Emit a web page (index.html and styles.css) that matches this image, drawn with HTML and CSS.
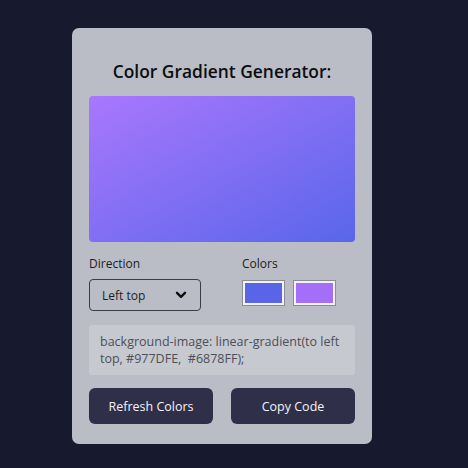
FILE: index.html
```html
<!DOCTYPE html>
<html lang="en">
<head>
<meta charset="utf-8">
<title>Color Gradient Generator</title>
<link rel="stylesheet" href="styles.css">
</head>
<body>
<main class="card">
  <h2 class="title">Color Gradient Generator:</h2>
  <div class="preview"></div>
  <div class="options">
    <div class="option">
      <p class="label">Direction</p>
      <div class="select">
        <span>Left top</span>
        <svg class="chev" width="12" height="8" viewBox="0 0 12 8"><path d="M2 1.8 L6 5.8 L10 1.8" fill="none" stroke="#111" stroke-width="2.4" stroke-linecap="round" stroke-linejoin="round"/></svg>
      </div>
    </div>
    <div class="option">
      <p class="label">Colors</p>
      <div class="swatches">
        <span class="swatch"><span class="fill fill-blue"></span></span>
        <span class="swatch"><span class="fill fill-purple"></span></span>
      </div>
    </div>
  </div>
  <div class="code">background-image: linear-gradient(to left top, #977DFE,&nbsp; #6878FF);</div>
  <div class="buttons">
    <button class="btn">Refresh Colors</button>
    <button class="btn">Copy Code</button>
  </div>
</main>
</body>
</html>
```
FILE: styles.css
```css
* { box-sizing: border-box; }
html, body { margin: 0; }
body {
  background: #171a2e;
  font-family: "Open Sans", "Liberation Sans", sans-serif;
  width: 468px;
  height: 468px;
  padding: 28px 0 0 72px;
}
.card {
  width: 300px;
  height: 416px;
  background: #babdc5;
  border-radius: 7px;
  padding: 31px 17px 20px;
  display: flex;
  flex-direction: column;
}
.title {
  margin: 0 0 13px;
  font-size: 17.4px;
  line-height: 24px;
  font-weight: 600;
  color: #0c0d12;
  text-align: center;
}
.preview {
  height: 146px;
  border-radius: 4px;
  background: linear-gradient(to bottom right, #a977fd, #5966ea);
}
.options {
  display: grid;
  grid-template-columns: 153px 1fr;
  margin-top: 13px;
}
.label {
  margin: 0 0 6px;
  font-size: 12px;
  line-height: 18px;
  color: #1c1d24;
}
.select {
  width: 112px;
  height: 32px;
  border: 1px solid #3a3c48;
  border-radius: 4px;
  display: flex;
  align-items: center;
  justify-content: space-between;
  padding: 0 13px 0 12px;
  font-size: 12px;
  color: #1c1d24;
}
.chev { display: block; }
.swatches {
  display: flex;
  gap: 8px;
  padding-top: 1px;
}
.swatch {
  width: 43px;
  height: 26px;
  background: #f3f3f6;
  border: 1px solid #8a8c96;
  padding: 2px;
  display: block;
}
.fill { display: block; width: 100%; height: 100%; }
.fill-blue { background: #5a64e8; }
.fill-purple { background: #a46ef8; }
.code {
  margin-top: 14px;
  height: 50px;
  background: #c7c9d0;
  border-radius: 3px;
  padding: 8px 11px;
  font-size: 12.5px;
  line-height: 17px;
  color: #4d4f58;
}
.buttons {
  margin-top: 13px;
  display: flex;
  justify-content: space-between;
}
.btn {
  width: 124px;
  height: 36px;
  border: 0;
  border-radius: 6px;
  background: #2f2f49;
  color: #f4f4f8;
  font-family: inherit;
  font-size: 12.5px;
  font-weight: 500;
}
```
